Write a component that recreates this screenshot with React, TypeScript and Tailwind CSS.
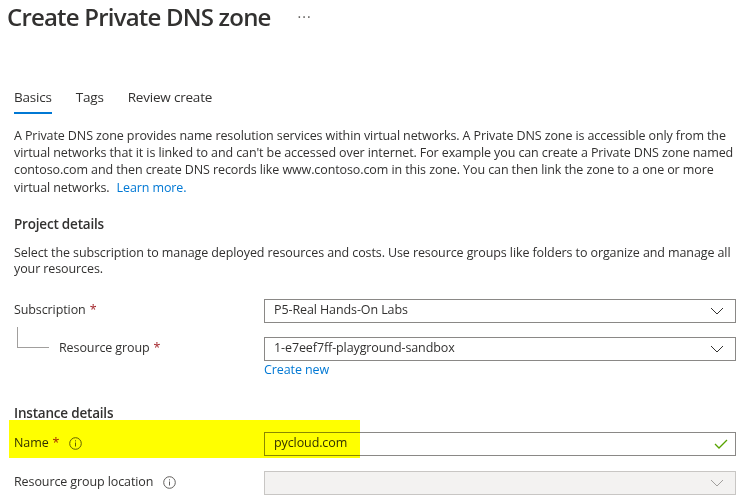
import React from "react";

const Chevron = ({ color = "#323130" }: { color?: string }) => (
  <svg width="14" height="8" viewBox="0 0 14 8" className="shrink-0">
    <path d="M1 1 L7 7 L13 1" fill="none" stroke={color} strokeWidth="1" />
  </svg>
);

const Info = () => (
  <svg width="13" height="13" viewBox="0 0 13 13" className="shrink-0">
    <circle cx="6.5" cy="6.5" r="5.8" fill="none" stroke="#605e5c" strokeWidth="1" />
    <rect x="6" y="5.5" width="1" height="4" fill="#605e5c" />
    <rect x="6" y="3.3" width="1" height="1.1" fill="#605e5c" />
  </svg>
);

const Check = () => (
  <svg width="14" height="10" viewBox="0 0 14 10" className="shrink-0">
    <path d="M1 5 L5 9 L13 1" fill="none" stroke="#57a300" strokeWidth="1.3" />
  </svg>
);

const Req = () => <span className="text-[#a4262c] ml-[4px]">*</span>;

export default function App() {
  return (
    <div
      className="w-[742px] h-[502px] bg-white overflow-hidden relative text-[#323130]"
      style={{ fontFamily: '"Segoe UI", "Open Sans", sans-serif' }}
    >
      {/* Title */}
      <div className="h-[34px] pl-[7px] flex items-center">
        <h1 className="text-[24px] font-semibold leading-[32px] tracking-[-0.8px]">Create Private DNS zone</h1>
        <span className="ml-[27px] text-[14px] text-[#605e5c] leading-none tracking-[1px]">···</span>
      </div>

      <div className="pl-[14px] pr-[6px]">
        {/* Tabs */}
        <div className="mt-[48px] flex gap-[24px] text-[13.5px] tracking-[-0.2px]">
          <div className="flex flex-col">
            <span className="leading-[30px]">Basics</span>
            <span className="h-[2px] bg-[#0078d4]" />
          </div>
          <div className="flex flex-col">
            <span className="leading-[30px]">Tags</span>
          </div>
          <div className="flex flex-col">
            <span className="leading-[30px]">Review create</span>
          </div>
        </div>

        {/* Description */}
        <p className="mt-[13px] text-[12.5px] tracking-[-0.1px] leading-[17.2px] whitespace-nowrap">
          A Private DNS zone provides name resolution services within virtual networks. A Private DNS zone is accessible only from the
          <br />
          virtual networks that it is linked to and can't be accessed over internet. For example you can create a Private DNS zone named
          <br />
          contoso.com and then create DNS records like www.contoso.com in this zone. You can then link the zone to a one or more
          <br />
          virtual networks.<span className="ml-[7px] text-[#0078d4]">Learn more.</span>
        </p>

        <h2 className="mt-[18px] text-[13.5px] tracking-[-0.2px] font-semibold leading-[20px]">Project details</h2>
        <p className="mt-[11px] text-[12.5px] tracking-[-0.1px] leading-[16px] whitespace-nowrap">
          Select the subscription to manage deployed resources and costs. Use resource groups like folders to organize and manage all
          <br />
          your resources.
        </p>

        {/* Subscription */}
        <div className="mt-[22px] flex items-center text-[12.5px] tracking-[-0.1px]">
          <div className="w-[250px] shrink-0">
            Subscription<Req />
          </div>
          <div className="flex-1 h-[24px] border border-[#8a8886] flex items-center pl-[9px] pr-[11px]">
            <span className="flex-1">P5-Real Hands-On Labs</span>
            <Chevron />
          </div>
        </div>

        {/* Resource group */}
        <div className="mt-[14px] flex items-center text-[12.5px] tracking-[-0.1px]">
          <div className="w-[250px] shrink-0 pl-[45px] relative">
            <div className="absolute left-[3px] top-[-12px] w-[32px] h-[21px] border-l border-b border-[#a19f9d]" />
            Resource group<Req />
          </div>
          <div className="flex-1 h-[24px] border border-[#8a8886] flex items-center pl-[9px] pr-[11px]">
            <span className="flex-1">1-e7eef7ff-playground-sandbox</span>
            <Chevron />
          </div>
        </div>
        <div className="flex text-[12.5px] tracking-[-0.1px] leading-[17px]">
          <div className="w-[250px] shrink-0" />
          <span className="text-[#0078d4]">Create new</span>
        </div>

        <h2 className="mt-[25px] text-[13.5px] tracking-[-0.2px] font-semibold leading-[20px]">Instance details</h2>

        {/* Name */}
        <div className="mt-[9px] flex items-center text-[12.5px] tracking-[-0.1px]">
          <div className="w-[250px] shrink-0 flex items-center">
            Name<Req />
            <span className="ml-[10px] flex"><Info /></span>
          </div>
          <div className="flex-1 h-[24px] border border-[#8a8886] flex items-center pl-[9px] pr-[7px]">
            <span className="flex-1">pycloud.com</span>
            <Check />
          </div>
        </div>

        {/* Resource group location */}
        <div className="mt-[15px] flex items-center text-[12.5px] tracking-[-0.1px]">
          <div className="w-[250px] shrink-0 flex items-center">
            Resource group location
            <span className="ml-[10px] flex"><Info /></span>
          </div>
          <div className="flex-1 h-[24px] border border-[#c8c6c4] bg-[#f3f2f1] flex items-center pl-[9px] pr-[11px]">
            <span className="flex-1" />
            <Chevron color="#a19f9d" />
          </div>
        </div>
      </div>

      {/* Highlight annotation */}
      <div className="absolute left-[9px] top-[420px] w-[351px] h-[38px] bg-[#ffff00] mix-blend-multiply pointer-events-none" />
    </div>
  );
}
